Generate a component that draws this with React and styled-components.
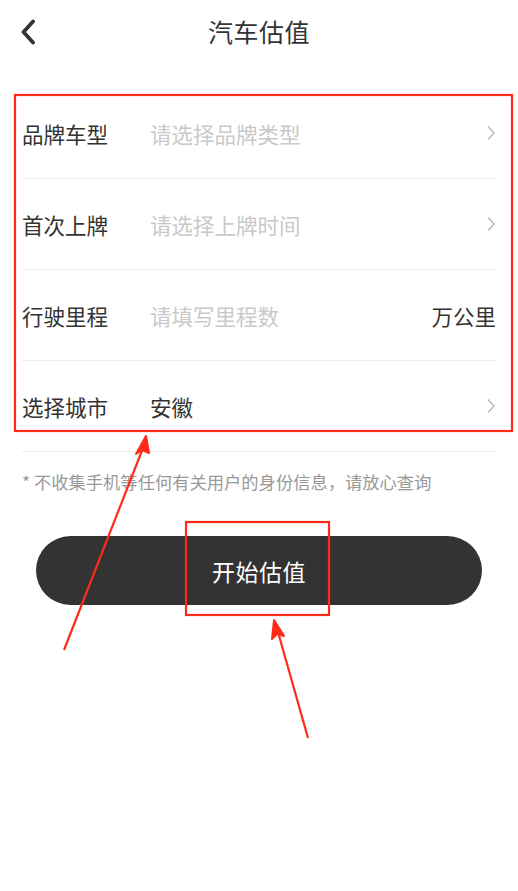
import React from "react";
import styled, { createGlobalStyle } from "styled-components";

const GlobalStyle = createGlobalStyle`
  html, body {
    margin: 0;
    padding: 0;
    background: #fff;
  }
  body {
    font-family: "Noto Sans CJK SC", "Noto Sans", sans-serif;
    color: #333;
  }
`;

const Page = styled.div`
  position: relative;
  width: 518px;
  height: 891px;
  overflow: hidden;
  background: #fff;
`;

const Header = styled.div`
  height: 62px;
  display: flex;
  align-items: center;
  justify-content: center;
  position: relative;
`;

const BackButton = styled.button`
  position: absolute;
  left: 13px;
  top: 17px;
  width: 30px;
  height: 30px;
  padding: 0;
  border: none;
  background: none;
  display: flex;
  align-items: center;
  justify-content: center;
`;

const Title = styled.h1`
  margin: 0;
  font-size: 25px;
  font-weight: 400;
  color: #333;
  letter-spacing: 0.5px;
`;

const Form = styled.div`
  margin: 26px 22px 0 22px;
`;

const Row = styled.div`
  height: 90px;
  display: flex;
  align-items: center;
  border-bottom: 1px solid #ececec;
`;

const Label = styled.div`
  width: 128px;
  font-size: 21.5px;
  color: #333;
  flex-shrink: 0;
`;

const Value = styled.div`
  flex: 1;
  font-size: 21.5px;
  color: ${({ $placeholder }) => ($placeholder ? "#c9c9c9" : "#333")};
`;

const Unit = styled.div`
  font-size: 21.5px;
  color: #333;
`;

const Notice = styled.p`
  margin: 17px 22px 0 22px;
  font-size: 17.3px;
  color: #999;
`;

const SubmitButton = styled.button`
  display: block;
  margin: 42px auto 0 auto;
  width: 446px;
  height: 69px;
  border: none;
  border-radius: 35px;
  background: #333;
  color: #fff;
  font-family: inherit;
  font-size: 23px;
  letter-spacing: 0.5px;
`;

const Markup = styled.svg`
  position: absolute;
  left: 0;
  top: 0;
  width: 518px;
  height: 891px;
  pointer-events: none;
`;

const Chevron = () => (
  <svg width="10" height="16" viewBox="0 0 10 16">
    <path d="M2 1.5 L8 8 L2 14.5" fill="none" stroke="#bdbdbd" strokeWidth="1.6" />
  </svg>
);

const rows = [
  { label: "品牌车型", value: "请选择品牌类型", placeholder: true, arrow: true },
  { label: "首次上牌", value: "请选择上牌时间", placeholder: true, arrow: true },
  { label: "行驶里程", value: "请填写里程数", placeholder: true, unit: "万公里" },
  { label: "选择城市", value: "安徽", arrow: true },
];

export default function App() {
  return (
    <Page>
      <GlobalStyle />
      <Header>
        <BackButton>
          <svg width="16" height="26" viewBox="0 0 16 26">
            <path d="M13 2.5 L3.5 13 L13 23.5" fill="none" stroke="#333" strokeWidth="3.8" strokeLinecap="round" strokeLinejoin="round" />
          </svg>
        </BackButton>
        <Title>汽车估值</Title>
      </Header>

      <Form>
        {rows.map((r) => (
          <Row key={r.label}>
            <Label>{r.label}</Label>
            <Value $placeholder={r.placeholder}>{r.value}</Value>
            {r.unit && <Unit>{r.unit}</Unit>}
            {r.arrow && <Chevron />}
          </Row>
        ))}
      </Form>

      <Notice>* 不收集手机等任何有关用户的身份信息，请放心查询</Notice>

      <SubmitButton>开始估值</SubmitButton>

      {/* red annotation marks */}
      <Markup viewBox="0 0 518 891">
        <rect x="15" y="95" width="497" height="336" fill="none" stroke="#ff2a1a" strokeWidth="2.2" />
        <rect x="186" y="522" width="143" height="93" fill="none" stroke="#ff2a1a" strokeWidth="2.2" />
        <line x1="64" y1="650" x2="143" y2="448" stroke="#ff2a1a" strokeWidth="2.2" />
        <path d="M146 436 L136 454 L142 450 L149 453 Z" fill="#ff2a1a" stroke="#ff2a1a" strokeWidth="2" strokeLinejoin="round" />
        <line x1="308" y1="738" x2="278" y2="632" stroke="#ff2a1a" strokeWidth="2.2" />
        <path d="M274 620 L272 639 L277 634 L284 636 Z" fill="#ff2a1a" stroke="#ff2a1a" strokeWidth="2" strokeLinejoin="round" />
      </Markup>
    </Page>
  );
}
